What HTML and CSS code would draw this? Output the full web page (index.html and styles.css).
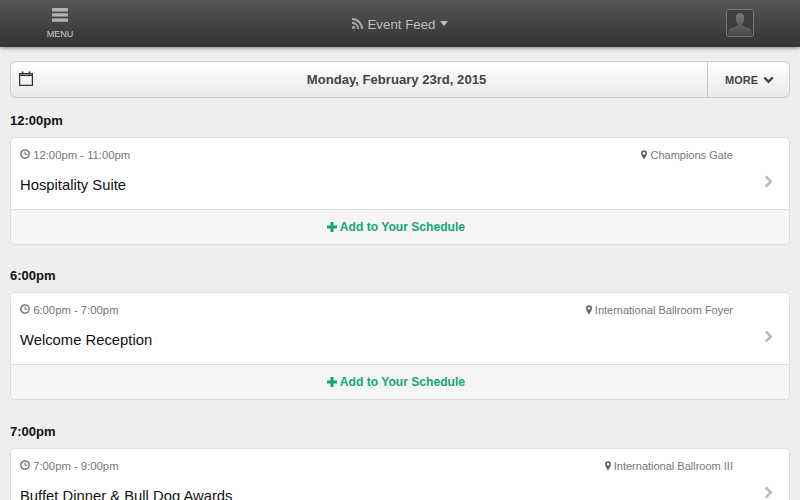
FILE: index.html
```html
<!DOCTYPE html>
<html>
<head>
    <title>Event Feed</title>
    <link rel="stylesheet" href="styles.css">
</head>
<body>
    <div class="top-bar">
        <div class="menu-button">
            <svg class="menu-icon" width="16" height="14" viewBox="0 0 16 14">
                <rect x="0" y="0" width="16" height="3.4" rx="0.6"/>
                <rect x="0" y="5.2" width="16" height="3.4" rx="0.6"/>
                <rect x="0" y="10.4" width="16" height="3.4" rx="0.6"/>
            </svg>
            <span>MENU</span>
        </div>
        <div class="feed-title">
            <svg width="11" height="11" viewBox="0 0 11 11">
                <circle cx="1.6" cy="9.4" r="1.6"/>
                <path d="M0 3.8a7.2 7.2 0 0 1 7.2 7.2h-2A5.2 5.2 0 0 0 0 5.8z"/>
                <path d="M0 0a11 11 0 0 1 11 11H9A9 9 0 0 0 0 2z"/>
            </svg>
            <span>Event Feed</span>
            <span class="caret"></span>
        </div>
        <div class="avatar">
            <svg width="26" height="26" viewBox="0 0 26 26">
                <defs>
                    <linearGradient id="personFill" x1="0" y1="0" x2="0" y2="1">
                        <stop offset="0" stop-color="#7a7a7a"/>
                        <stop offset="1" stop-color="#484848"/>
                    </linearGradient>
                </defs>
                <path fill="url(#personFill)" d="M13 3c2.600 0 4.200 2.100 4.200 5.200 0 2.600-.9 4.800-2.200 6 0 1 .4 1.600 1.600 2.100 2.800 1.100 6.300 1.700 7.400 3.500.6 1 1 3.200 1 6.200H1c0-3 .4-5.200 1-6.200 1.100-1.800 4.600-2.400 7.400-3.500 1.200-.5 1.600-1.100 1.600-2.100-1.300-1.200-2.200-3.400-2.200-6C8.800 5.100 10.400 3 13 3z"/>
            </svg>
        </div>
    </div>

    <div class="content">
        <div class="date-bar">
            <div class="date-icon">
                <svg width="14" height="15" viewBox="0 0 14 15">
                    <path d="M.6 2.600h12.800v11.800H.6z" fill="none" stroke="#333" stroke-width="1.200"/>
                    <path d="M.6 4.400h12.800" stroke="#333" stroke-width="1.400"/>
                    <path d="M3.500 3V1M10.500 3V1" stroke="#333" stroke-width="1.600" stroke-linecap="round"/>
                </svg>
            </div>
            <div class="date-label">Monday, February 23rd, 2015</div>
            <div class="more-button">
                <span>MORE</span>
                <svg width="11" height="8" viewBox="0 0 11 8">
                    <path d="M1.300 1.500l4.200 4.200 4.200-4.200" fill="none" stroke="#444" stroke-width="2.400"/>
                </svg>
            </div>
        </div>

        <h2 class="time-heading">12:00pm</h2>
        <div class="event-card">
            <div class="event-body">
                <div class="event-meta">
                    <span class="event-time">
                        <svg class="clock" width="10" height="10" viewBox="0 0 10 10">
                            <circle cx="5" cy="5" r="4.200" fill="none" stroke="#666" stroke-width="1.300"/>
                            <path d="M5 2.500V5.300H7.200" fill="none" stroke="#666" stroke-width="1"/>
                        </svg>
                        12:00pm - 11:00pm
                    </span>
                    <span class="event-place">
                        <svg class="pin" width="6" height="10" viewBox="0 0 7 11">
                            <path fill-rule="evenodd" d="M3.500 0a3.500 3.500 0 0 1 3.500 3.500c0 2-2.300 5.300-3.500 7.500C2.300 8.800 0 5.500 0 3.500A3.500 3.500 0 0 1 3.500 0zm0 2a1.500 1.500 0 1 0 0 3 1.500 1.500 0 0 0 0-3z"/>
                        </svg>
                        Champions Gate
                    </span>
                </div>
                <div class="event-name">Hospitality Suite</div>
                <svg class="event-arrow" width="9" height="13" viewBox="0 0 9 13">
                    <path d="M1.800 1.500l5 5-5 5" fill="none" stroke="#bbb" stroke-width="2.600"/>
                </svg>
            </div>
            <div class="event-action">
                <svg class="plus" width="10" height="10" viewBox="0 0 10 10"><path d="M3.500 0h3v3.500H10v3H6.500V10h-3V6.500H0v-3h3.500z"/></svg>
                Add to Your Schedule
            </div>
        </div>

        <h2 class="time-heading">6:00pm</h2>
        <div class="event-card">
            <div class="event-body">
                <div class="event-meta">
                    <span class="event-time">
                        <svg class="clock" width="10" height="10" viewBox="0 0 10 10">
                            <circle cx="5" cy="5" r="4.200" fill="none" stroke="#666" stroke-width="1.300"/>
                            <path d="M5 2.500V5.300H7.200" fill="none" stroke="#666" stroke-width="1"/>
                        </svg>
                        6:00pm - 7:00pm
                    </span>
                    <span class="event-place">
                        <svg class="pin" width="6" height="10" viewBox="0 0 7 11">
                            <path fill-rule="evenodd" d="M3.500 0a3.500 3.500 0 0 1 3.500 3.500c0 2-2.300 5.300-3.500 7.500C2.300 8.800 0 5.500 0 3.500A3.500 3.500 0 0 1 3.500 0zm0 2a1.500 1.500 0 1 0 0 3 1.500 1.500 0 0 0 0-3z"/>
                        </svg>
                        International Ballroom Foyer
                    </span>
                </div>
                <div class="event-name">Welcome Reception</div>
                <svg class="event-arrow" width="9" height="13" viewBox="0 0 9 13">
                    <path d="M1.800 1.500l5 5-5 5" fill="none" stroke="#bbb" stroke-width="2.600"/>
                </svg>
            </div>
            <div class="event-action">
                <svg class="plus" width="10" height="10" viewBox="0 0 10 10"><path d="M3.500 0h3v3.500H10v3H6.500V10h-3V6.500H0v-3h3.500z"/></svg>
                Add to Your Schedule
            </div>
        </div>

        <h2 class="time-heading">7:00pm</h2>
        <div class="event-card">
            <div class="event-body">
                <div class="event-meta">
                    <span class="event-time">
                        <svg class="clock" width="10" height="10" viewBox="0 0 10 10">
                            <circle cx="5" cy="5" r="4.200" fill="none" stroke="#666" stroke-width="1.300"/>
                            <path d="M5 2.500V5.300H7.200" fill="none" stroke="#666" stroke-width="1"/>
                        </svg>
                        7:00pm - 9:00pm
                    </span>
                    <span class="event-place">
                        <svg class="pin" width="6" height="10" viewBox="0 0 7 11">
                            <path fill-rule="evenodd" d="M3.500 0a3.500 3.500 0 0 1 3.500 3.500c0 2-2.300 5.300-3.500 7.500C2.300 8.800 0 5.500 0 3.500A3.500 3.500 0 0 1 3.500 0zm0 2a1.500 1.500 0 1 0 0 3 1.500 1.500 0 0 0 0-3z"/>
                        </svg>
                        International Ballroom III
                    </span>
                </div>
                <div class="event-name">Buffet Dinner &amp; Bull Dog Awards</div>
                <svg class="event-arrow" width="9" height="13" viewBox="0 0 9 13">
                    <path d="M1.800 1.500l5 5-5 5" fill="none" stroke="#bbb" stroke-width="2.600"/>
                </svg>
            </div>
        </div>
    </div>
</body>
</html>
```

FILE: styles.css
```css
html, body {
    height: 100%;
    overflow: hidden;
}
body {
    margin: 0;
    background: #eee;
    color: #000;
    font-family: "Liberation Sans", Arial, sans-serif;
}
.top-bar {
    display: flex;
    align-items: center;
    justify-content: space-between;
    height: 47px;
    padding: 0 46px;
    background: linear-gradient(#555, #333);
    box-shadow: 0 1px 4px rgba(0, 0, 0, 0.45);
    position: relative;
}
.menu-button {
    display: flex;
    flex-direction: column;
    align-items: center;
    width: 28px;
    color: #ccc;
    font-size: 9px;
}
.menu-icon {
    fill: #b4b4b4;
    margin-bottom: 7px;
}
.feed-title {
    display: flex;
    align-items: center;
    gap: 4px;
    color: #bdbdbd;
    font-size: 13.3px;
    padding-top: 2px;
}
.feed-title svg {
    fill: #a8a8a8;
    margin-top: -3px;
}
.caret {
    width: 0;
    height: 0;
    border-left: 4px solid transparent;
    border-right: 4px solid transparent;
    border-top: 5px solid #bdbdbd;
    margin-top: -3px;
}
.avatar {
    width: 26px;
    height: 26px;
    border: 1px solid #777;
    border-radius: 3px;
    background: #3e3e3e;
    margin-top: -1px;
    overflow: hidden;
}
.avatar svg {
    display: block;
}
.content {
    padding: 14px 10px 0;
}
.date-bar {
    display: flex;
    align-items: center;
    height: 35px;
    background: linear-gradient(#fff, #e9e9e9);
    border: 1px solid #ccc;
    border-radius: 6px;
}
.date-icon {
    width: 38px;
    padding-left: 8px;
    box-sizing: border-box;
    height: 15px;
    margin-top: -2px;
}
.date-label {
    flex: 1;
    text-align: center;
    font-size: 13.1px;
    font-weight: bold;
    color: #444;
    padding-left: 37px;
}
.more-button {
    display: flex;
    align-items: center;
    gap: 5px;
    width: 82px;
    box-sizing: border-box;
    height: 100%;
    padding-left: 17px;
    border-left: 1px solid #c4c4c4;
    font-size: 11px;
    font-weight: bold;
    color: #444;
}
.time-heading {
    margin: 15px 0 9px;
    font-size: 13px;
    line-height: 15px;
    font-weight: bold;
    color: #111;
}
.event-card {
    background: #fff;
    border: 1px solid #ddd;
    border-radius: 5px;
    margin-bottom: 23.4px;
}
.event-body {
    position: relative;
    height: 71px;
    padding: 0 9px;
    border-bottom: 1px solid #ddd;
}
.event-meta {
    display: flex;
    justify-content: space-between;
    align-items: baseline;
    padding: 11px 47px 0 0;
    font-size: 11px;
    line-height: 13px;
    color: #777;
}
.event-time {
    font-size: 11.3px;
}
.clock {
    vertical-align: 0;
}
.pin {
    fill: #666;
    vertical-align: -1px;
}
.event-name {
    margin-top: 14px;
    font-size: 14.8px;
    line-height: 18px;
    color: #111;
}
.event-arrow {
    position: absolute;
    right: 16px;
    top: 37px;
}
.event-action {
    height: 34px;
    line-height: 34px;
    padding-right: 8px;
    text-align: center;
    background: #f5f5f5;
    border-radius: 0 0 5px 5px;
    color: #12a871;
    font-size: 12.1px;
    font-weight: bold;
}
.plus {
    fill: #12a871;
    vertical-align: -0.5px;
}
```
